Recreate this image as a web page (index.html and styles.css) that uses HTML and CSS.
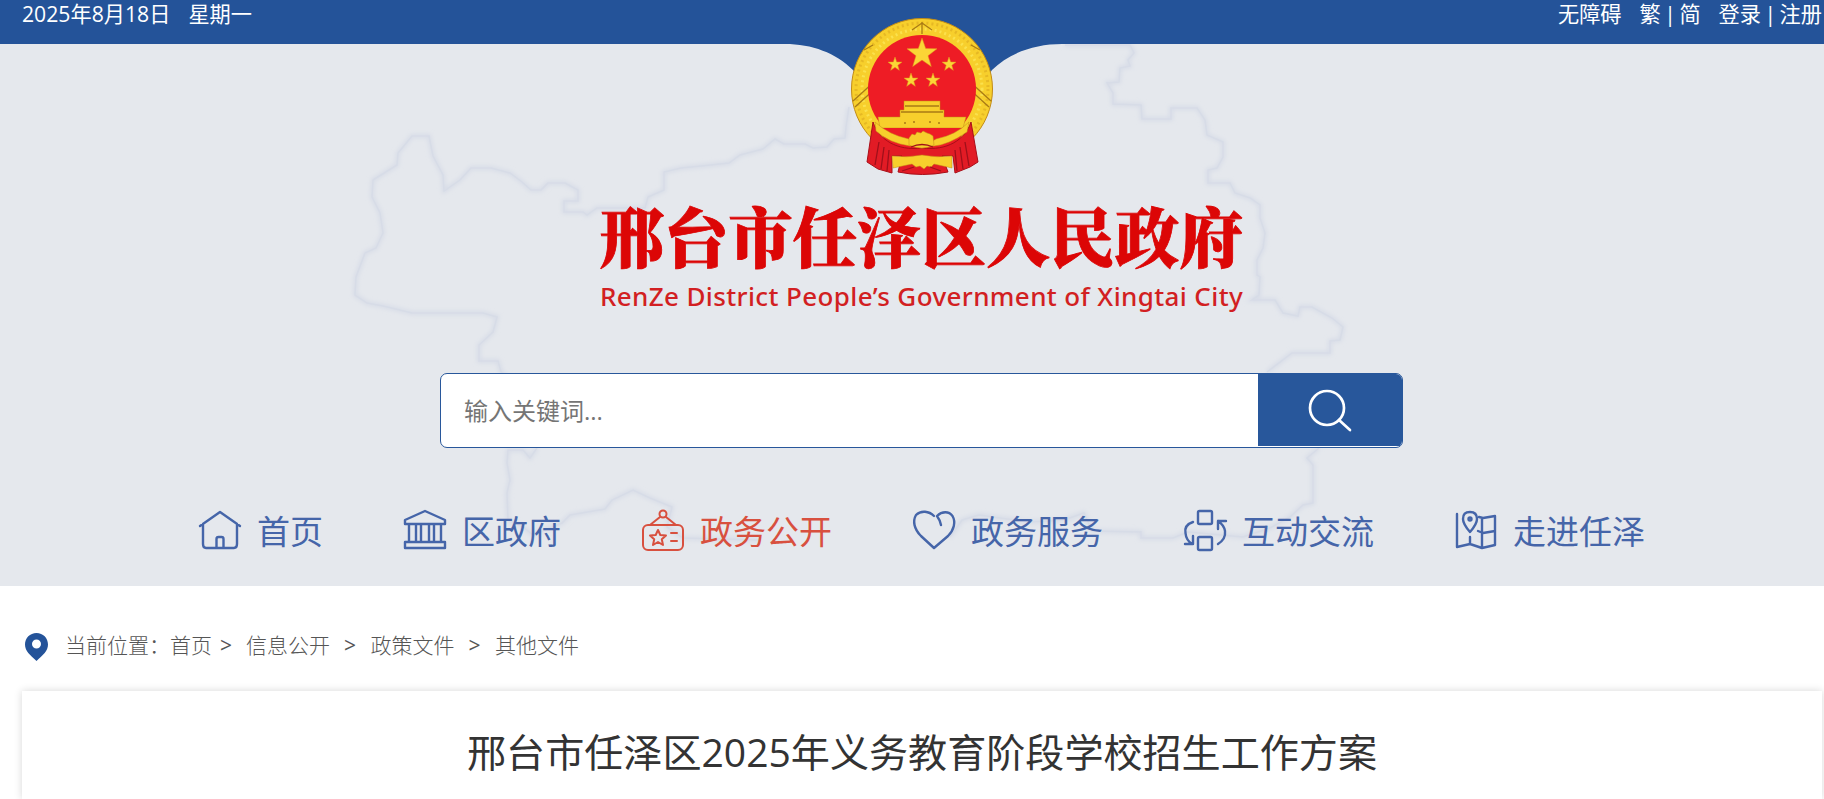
FILE: index.html
```html
<!DOCTYPE html>
<html lang="zh-CN">
<head>
  <meta charset="UTF-8">
  <title>邢台市任泽区人民政府</title>
  <link rel="stylesheet" href="styles.css">
</head>
<body>

  <header class="header">
    <!-- district outline and the curved notch behind the emblem -->
    <svg class="header-bg" width="1824" height="586" viewBox="0 0 1824 586">
      <defs>
        <filter id="soft" x="-5%" y="-5%" width="110%" height="110%"><feGaussianBlur stdDeviation="2"/></filter>
        <g id="outline">
          <path d="M849 107L846 127L845 138L834 139L827 147L813 148L805 144L784 144L775 139L763 149L740 155L729 163L701 166L681 168L664 172L664 190L648 197L645 208H597L587 215L583 212H564V201H578V190L565 183H548L541 190H531L522 182L510 173L491 168H471L460 180L444 191L443 175L433 156L429 136H412L398 153L397 165L373 180L372 197L380 213L383 233L376 248L365 253L356 277L355 295L367 303L383 306L412 313H483L497 317L493 332L479 345V361H498L501 372L520 385"/>
          <path d="M537 448L530 458L523 450H508L507 463L510 480L507 493L508 520L523 527L533 535L562 523L570 515L605 509L612 500L633 490L650 498L672 507L667 527L683 538L760 540"/>
          <path d="M950 537L962 520L979 515L1029 522L1064 520L1084 513L1092 531L1141 532V538H1173L1188 532L1243 537L1270 528L1290 517L1303 505L1313 503V465L1307 458L1319 448"/>
          <path d="M1065 45H1130L1134 53L1128 60L1130 66L1120 68L1119 82L1107 83L1113 93V104L1141 105L1142 119H1171V108H1197L1205 120L1207 135L1223 142V157L1217 168L1208 170V183H1230L1235 193L1250 198L1260 205V218L1265 233L1263 248L1257 260V275L1260 277L1259 295L1252 300H1275L1283 313L1298 316L1300 307H1312L1332 318L1343 327L1340 340L1330 341V353H1292L1267 372"/>
        </g>
      </defs>
      <use href="#outline" class="map-shadow" filter="url(#soft)"/>
      <use href="#outline" class="map-line"/>
      <path class="notch" d="M0 0H1824V44H1062C1035 44 1009 53 992 70L975 95H870L853 70C836 53 812 44 785 44H0Z"/>
    </svg>

    <div class="topbar">
      <div class="date"><span>2025年8月18日</span><span>星期一</span></div>
      <div class="tools"><a>无障碍</a><span>繁 | 简</span><span>登录 | 注册</span></div>
    </div>

    <div class="brand">
      <svg class="emblem" width="144" height="160" viewBox="0 0 144 160">
        <circle class="gold" cx="72" cy="73" r="70.500"/>
        <circle class="wheat" cx="72" cy="73" r="66"/>
        <circle class="wheat wheat-inner" cx="72" cy="73" r="60"/>
        <path class="gold-line" d="M72 6v12M62 14l10-7 10 7M3 85l22-20M5 91l22-20M141 85l-22-20M139 91l-22-20M14 34l9-5M130 34l-9-5"/>
        <circle class="red" cx="72" cy="73" r="54"/>
        <g class="star">
          <path d="M72 22l3.700 10.600 11.300.2-9 6.900 3.300 10.800-9.300-6.400-9.300 6.400 3.300-10.800-9-6.900 11.300-.2z"/>
          <path id="s" d="M45 41l1.700 5 5.300.1-4.200 3.200 1.500 5-4.300-3-4.300 3 1.500-5-4.200-3.200 5.300-.1z"/>
          <use href="#s" x="54"/>
          <use href="#s" x="16" y="16"/>
          <use href="#s" x="38" y="16"/>
        </g>
        <path class="gold plain" d="M54 85h36v9h4v7h22l-3 11H30l-2-11h22v-7h4z"/>
        <path class="gold-line" d="M51 96h42M55 90h34M54 107h2M63 106h2M79 106h2M88 107h2"/>
        <path class="red" d="M30 112h84l-8 23H38z"/>
        <path class="ribbon" d="M23 106C29 124 47 135 72 132C97 135 115 124 121 106L128 146 120 151 105 157 103 140H92L98 156Q72 161 48 156L52 140H42L42 157 28 153 17 146Z"/>
        <path class="gold plain" d="M25 106Q39 119 59 123Q72 133 86 123Q106 119 119 106L117 116Q98 129 84 130L72 132 60 130Q39 127 26 115Z"/>
        <path class="gold plain" d="M59 129V122L62 118 65 119 67 116 71 117 73 115 77 117 80 118 83 120 84 129Q72 135 59 129Z"/>
        <path class="gold plain" d="M42 140Q57 142 72 139Q87 142 102 140V152L84 148 81 151 77 150 74 153 70 150 66 151 62 148 43 152Z"/>
        <path class="fold" d="M29 126l-4 23M34 131l-3 22M39 134l-2 21M115 126l4 24M110 131l3 22M105 134l2 21M52 155l12-4M91 155l-11-4M61 131Q72 126 83 131"/>
      </svg>
      <h1 class="site-name">邢台市任泽区人民政府</h1>
      <p class="site-name-en">RenZe District People’s Government of Xingtai City</p>
    </div>

    <form class="search">
      <input class="search-input" type="text" placeholder="输入关键词...">
      <button class="search-btn" type="button" aria-label="搜索">
        <svg width="44" height="44" viewBox="0 0 44 44"><circle cx="19" cy="19" r="17"/><path d="M31 31l11 10"/></svg>
      </button>
    </form>

    <nav class="nav">
      <a class="nav-item">
        <svg class="nav-icon" viewBox="0 0 42 42"><path d="M1 16L21 2L41 16M4 14v20q0 4 3 4h28q3 0 3-4V14M17.500 37V29q0-2 2-2h3q2 0 2 2v8"/></svg>
        <span>首页</span>
      </a>
      <a class="nav-item">
        <svg class="nav-icon" viewBox="0 0 42 42"><path d="M1 14V10L21 1L41 10V14ZM1 32h40v6H1ZM5 15v16M12 15v16M17 15v16M25 15v16M30 15v16M37 15v16"/></svg>
        <span>区政府</span>
      </a>
      <a class="nav-item active">
        <svg class="nav-icon" viewBox="0 0 42 42"><rect x="1" y="15" width="40" height="25" rx="5"/><circle cx="21" cy="4" r="3.500"/><path d="M18 7L8 15M24 7l10 8M16 20l2.300 5 5.700.5-4.200 3.800 1.200 5.700-5-3-5 3 1.200-5.700-4.200-3.800 5.700-.5zM29 23h6M29 31h6"/></svg>
        <span>政务公开</span>
      </a>
      <a class="nav-item">
        <svg class="nav-icon" viewBox="0 0 42 42"><path d="M28 15Q27 10 24 6C29 1 36 1 39.500 6C43 12 41 20 35 26L21 38L8 26C1 19-.5 11 3 5C8 0 16 1 21 6"/></svg>
        <span>政务服务</span>
      </a>
      <a class="nav-item">
        <svg class="nav-icon" viewBox="0 0 42 42"><rect x="14" y="1" width="14" height="13" rx="1.500"/><rect x="14" y="27" width="14" height="13" rx="1.500"/><path d="M9 12Q0 15 1.500 23Q2 30 8 34M1 34h8v-8M34 34Q42 29 41 21Q40 15 34 11M34 19v-8h8"/></svg>
        <span>互动交流</span>
      </a>
      <a class="nav-item">
        <svg class="nav-icon" viewBox="0 0 42 42"><path d="M2 4v33l13-3 12 4 13-3V6l-12 2-4-1M15 27v7M27 8v30M23 21l5 2 12-2M15 22Q8 14 8 9Q8 2 15 2Q22 2 22 9Q22 14 15 22Z"/><circle cx="15" cy="9" r="1.500"/></svg>
        <span>走进任泽</span>
      </a>
    </nav>
  </header>

  <main class="main">
    <div class="crumbs">
      <svg class="pin" width="23" height="28" viewBox="0 0 23 28"><path fill-rule="evenodd" d="M11.500 0C5 0 0 5 0 11.500C0 18 5 22 11.500 28C18 22 23 18 23 11.500C23 5 18 0 11.500 0ZM11.500 6.500a4.500 4.500 0 1 1 0 9a4.500 4.500 0 1 1 0-9Z"/></svg>
      <span>当前位置：</span><a>首页</a><i class="first">&gt;</i><a>信息公开</a><i>&gt;</i><a>政策文件</a><i>&gt;</i><a>其他文件</a>
    </div>
    <article class="article">
      <h2 class="article-title">邢台市任泽区2025年义务教育阶段学校招生工作方案</h2>
    </article>
  </main>

</body>
</html>
```
FILE: styles.css
```css
* {
  box-sizing: border-box;
}

body {
  margin: 0;
  background: #fff;
  font-family: "Open Sans", "Noto Sans CJK SC", sans-serif;
}

.header {
  position: relative;
  height: 586px;
  background: #e5e8ed;
}

.header-bg {
  position: absolute;
  top: 0;
  left: 0;
}

.map-line,
.map-shadow {
  fill: none;
  stroke: #d7dce7;
  stroke-width: 1.5;
}

.map-shadow {
  stroke-width: 4;
}

.notch {
  fill: #245399;
}

.topbar {
  position: relative;
  height: 44px;
  padding: 0 2px 0 22px;
  display: flex;
  justify-content: space-between;
  color: #fff;
  font-size: 21.2px;
  line-height: 28px;
}

.date,
.tools {
  display: flex;
  gap: 18px;
  white-space: nowrap;
}

.tools {
  word-spacing: -2px;
}

.brand {
  position: relative;
  display: flex;
  flex-direction: column;
  align-items: center;
  margin-top: -28px;
  padding-left: 19px;
}

.emblem {
  display: block;
}

.gold {
  fill: #f7cf2c;
  stroke: #c28b16;
  stroke-width: 1;
}

.plain {
  stroke-width: 0.5;
}

.wheat {
  fill: none;
  stroke: #d9a51f;
  stroke-width: 3;
  stroke-dasharray: 2 3;
  opacity: 0.55;
}

.wheat-inner {
  stroke: #fff06a;
}

.gold-line {
  fill: none;
  stroke: #a97b15;
  stroke-width: 1.3;
}

.red {
  fill: #ee1c25;
}

.star {
  fill: #fbd536;
  stroke: #e0981d;
  stroke-width: 0.5;
}

.ribbon {
  fill: #e21b25;
  stroke: #a80e18;
  stroke-width: 1;
}

.fold {
  fill: none;
  stroke: #9f101a;
  stroke-width: 1.3;
}

.site-name {
  margin: 8px 0 0;
  color: #dc0606;
  font-family: "Noto Serif CJK SC", "Noto Sans CJK SC", serif;
  font-size: 64.4px;
  font-weight: 900;
  line-height: 100px;
  white-space: nowrap;
  -webkit-text-stroke: 0.8px #dc0606;
}

.site-name-en {
  margin: -6px 0 0;
  color: #d21f22;
  font-family: "Noto Sans", sans-serif;
  font-size: 26px;
  font-weight: 500;
  line-height: 36px;
  letter-spacing: 0.38px;
  white-space: nowrap;
}

.search {
  position: relative;
  display: flex;
  width: 963px;
  height: 75px;
  margin: 59px 0 0 440px;
  border: 1px solid #28579b;
  border-radius: 7px;
  background: #fff;
  overflow: hidden;
}

.search-input {
  flex: 1;
  padding: 0 23px;
  border: 0;
  outline: 0;
  background: none;
  font-family: inherit;
  font-size: 24px;
}

.search-input::placeholder {
  color: #757575;
}

.search-btn {
  width: 144px;
  height: 72px;
  padding: 4px 0 0;
  border: 0;
  background: #28579b;
}

.search-btn svg {
  fill: none;
  stroke: #fff;
  stroke-width: 2.7;
  stroke-linecap: round;
}

.nav {
  position: relative;
  display: flex;
  gap: 80px;
  margin-top: 60px;
  padding-left: 199px;
}

.nav-item {
  display: flex;
  align-items: center;
  gap: 17px;
  color: #4565a9;
  font-size: 33px;
  line-height: 48px;
  white-space: nowrap;
}

.nav-item.active {
  color: #d8503f;
}

.nav-item span {
  margin-left: -1px;
  margin-right: 1px;
}

.nav-icon {
  width: 42px;
  height: 42px;
  margin-top: -2px;
  overflow: visible;
  fill: none;
  stroke: currentColor;
  stroke-width: 2.4;
  stroke-linejoin: round;
  stroke-linecap: round;
}

.active .nav-icon {
  stroke-width: 2;
}

.main {
  padding: 44px 2px 0 22px;
}

.crumbs {
  display: flex;
  align-items: center;
  height: 31px;
  padding-left: 3px;
  color: #555;
  font-size: 21px;
  font-weight: 300;
  line-height: 31px;
  white-space: nowrap;
}

.crumbs i {
  width: 40.5px;
  padding-left: 14px;
  font-style: normal;
  font-weight: 400;
}

.crumbs .first {
  width: 34px;
  padding-left: 8px;
}

.pin {
  margin: 2px 17px 0 0;
  fill: #245399;
}

.article {
  height: 108px;
  margin-top: 30px;
  padding-top: 32px;
  box-shadow: 0 0 8px rgba(0, 0, 0, 0.16);
}

.article-title {
  margin: 0;
  color: #333;
  font-size: 39.1px;
  font-weight: 400;
  line-height: 58px;
  text-align: center;
}
```
